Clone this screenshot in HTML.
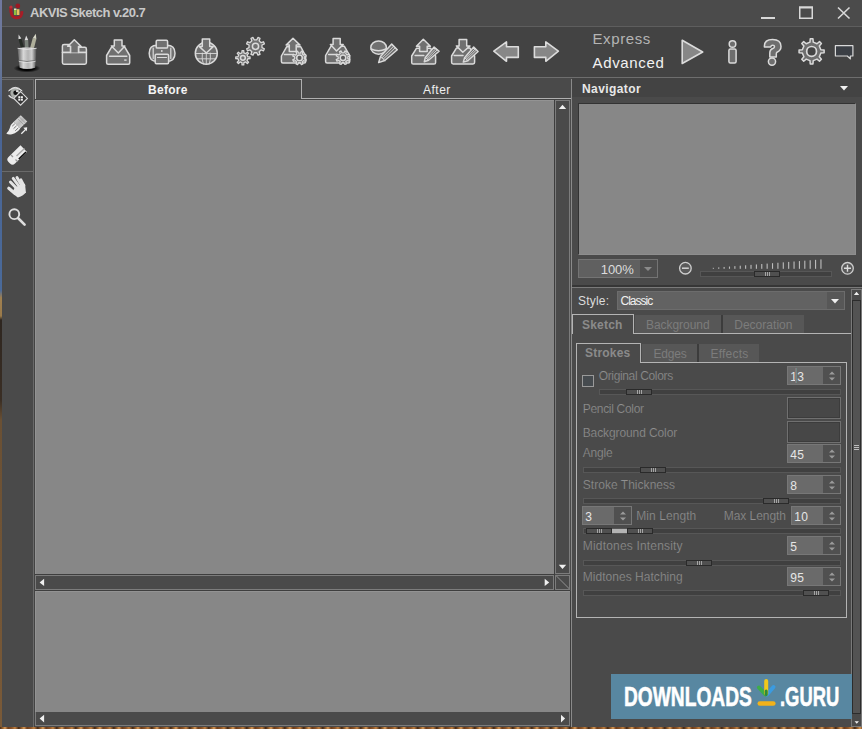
<!DOCTYPE html>
<html><head><meta charset="utf-8">
<style>
*{margin:0;padding:0;box-sizing:border-box}
html,body{width:862px;height:729px;overflow:hidden;background:#4a4a4a}
body{position:relative;font-family:"Liberation Sans",sans-serif}
.a{position:absolute}
.t{position:absolute;white-space:nowrap;line-height:1}
svg{position:absolute;overflow:visible}
</style></head><body>

<!-- left blue edge -->
<div class="a" style="left:0;top:0;width:2px;height:729px;background:linear-gradient(180deg,#7078a0 0px,#6a7898 60px,#4a6494 120px,#4a6a9a 290px,#a08050 298px,#9a7a4a 316px,#2e2620 320px,#3a2e24 400px,#6a5034 420px,#7a5a38 729px)"></div>

<!-- title bar -->
<div class="a" style="left:2px;top:0;width:860px;height:26px;background:#4b4b4b"></div>
<div class="a" style="left:2px;top:26px;width:860px;height:1px;background:#5e5e5e"></div>
<div class="t" style="left:30px;top:6px;font-size:13px;font-weight:bold;color:#c8c8c8;letter-spacing:-0.5px">AKVIS Sketch v.20.7</div>

<!-- toolbar -->
<div class="a" style="left:2px;top:27px;width:860px;height:50px;background:#434343"></div>
<div class="a" style="left:2px;top:77px;width:860px;height:1px;background:#6e6e6e"></div>

<!-- main bg -->
<div class="a" style="left:2px;top:78px;width:860px;height:649px;background:#4a4a4a"></div>
<!-- desktop strip -->
<div class="a" style="left:0;top:727px;width:862px;height:2px;background:repeating-linear-gradient(90deg,#4a2a14 0px,#a06830 3px,#d89a58 5px,#6a3a18 8px,#8a5428 12px,#c08040 15px,#3a2010 19px)"></div>

<!-- left toolbox -->
<div class="a" style="left:2px;top:79px;width:31px;height:1px;background:#6a6a6a"></div>
<div class="a" style="left:33px;top:79px;width:1px;height:648px;background:#6a6a6a"></div>
<div class="a" style="left:2px;top:171px;width:31px;height:1px;background:#6a6a6a"></div>

<!-- tabs -->
<div class="a" style="left:35px;top:79px;width:267px;height:21px;border:1px solid #b0b0b0;border-bottom:none;background:#4a4a4a"></div>
<div class="a" style="left:302px;top:98px;width:269px;height:1px;background:#b0b0b0"></div>
<div class="t" style="left:148px;top:84px;font-size:12px;font-weight:bold;color:#f4f4f4;letter-spacing:0.3px">Before</div>
<div class="t" style="left:423px;top:84px;font-size:12px;color:#eeeeee;letter-spacing:0.5px">After</div>

<!-- canvas area -->
<div class="a" style="left:571px;top:79px;width:1px;height:648px;background:#8a8a8a"></div>
<div class="a" style="left:35px;top:99px;width:536px;height:1px;background:#434343"></div>
<div class="a" style="left:35px;top:100px;width:519px;height:474px;background:#878787;border-left:1px solid #939393;border-top:1px solid #939393"></div>
<div class="a" style="left:554px;top:100px;width:1px;height:474px;background:#3e3e3e"></div>
<!-- v scrollbar -->
<div class="a" style="left:555px;top:100px;width:15px;height:474px;border:1px solid #7c7c7c;background:#4a4a4a"></div>
<!-- h scrollbar -->
<div class="a" style="left:35px;top:574px;width:520px;height:1px;background:#3e3e3e"></div>
<div class="a" style="left:35px;top:575px;width:519px;height:15px;border:1px solid #7c7c7c;background:#4a4a4a"></div>
<div class="a" style="left:554px;top:575px;width:1px;height:15px;background:#3e3e3e"></div>
<!-- corner -->
<div class="a" style="left:555px;top:575px;width:15px;height:15px;border:1px solid #7c7c7c;background:#4a4a4a;overflow:hidden"><div class="a" style="left:-3px;top:6px;width:20px;height:1px;background:#7c7c7c;transform:rotate(45deg)"></div></div>
<div class="a" style="left:35px;top:590px;width:535px;height:1px;background:#3e3e3e"></div>
<!-- bottom canvas -->
<div class="a" style="left:35px;top:591px;width:535px;height:121px;background:#878787;border-left:1px solid #939393;border-top:1px solid #939393"></div>
<div class="a" style="left:570px;top:591px;width:1px;height:136px;background:#3e3e3e"></div>
<div class="a" style="left:35px;top:712px;width:535px;height:14px;background:#4a4a4a;border-left:1px solid #7c7c7c;border-right:1px solid #7c7c7c;border-bottom:1px solid #7c7c7c"></div>
<div class="a" style="left:34px;top:99px;width:1px;height:628px;background:#434343"></div>

<!-- right panel -->
<div class="a" style="left:572px;top:78px;width:290px;height:19px;background:#434343"></div>
<div class="t" style="left:582px;top:83px;font-size:12px;font-weight:bold;color:#e8e8e8;letter-spacing:0.4px">Navigator</div>
<div class="a" style="left:578px;top:103px;width:278px;height:152px;background:#878787;border-left:1px solid #333;border-top:1px solid #333;border-right:1px solid #8e8e8e;border-bottom:1px solid #8e8e8e"></div>


<!-- Express / Advanced -->
<div class="t" style="left:592.5px;top:31px;font-size:15px;color:#b4b4b4;letter-spacing:0.6px">Express</div>
<div class="t" style="left:592.5px;top:55px;font-size:15px;color:#f2f2f2;letter-spacing:0.65px">Advanced</div>

<!-- canvas scroll arrows -->
<svg width="862" height="729" style="left:0;top:0" viewBox="0 0 862 729">
<g fill="#f0f0f0">
<path d="M558.8,109 L562.5,104.8 L566.2,109 Z"/>
<path d="M558.8,564.7 L566.2,564.7 L562.5,568.9 Z"/>
<path d="M44.1,578.8 L44.1,586.1 L39.6,582.45 Z"/>
<path d="M544.7,578.8 L544.7,586.1 L549.2,582.45 Z"/>
<path d="M44.1,714.7 L44.1,722.4 L39.6,718.55 Z"/>
<path d="M561,714.7 L561,722.4 L565.1,718.55 Z"/>
<path d="M840,86 L848,86 L844,90.5 Z"/>
</g>
</svg>

<!-- PANEL START -->
<div class="a" style="left:578px;top:259px;width:80px;height:19px;background:#606060;border:1px solid #747474"></div>
<div class="a" style="left:640px;top:260px;width:17px;height:17px;background:#4e4e4e"></div>
<svg width="20" height="20" style="left:638px;top:258px" viewBox="0 0 20 20"><path d="M6,9 L14,9 L10,13 Z" fill="#8a8a8a"/></svg>
<div class="t" style="left:600.8px;top:263.0px;font-size:13px;color:#dcdcdc;letter-spacing:-0.1px">100%</div>
<svg width="862" height="729" style="left:0;top:0" viewBox="0 0 862 729"><circle cx="685.4" cy="268.2" r="5.8" fill="#5a5a5a" stroke="#cfcfcf" stroke-width="1.3"/><path d="M682,268.2 H688.8" stroke="#dcdcdc" stroke-width="1.4"/><circle cx="847.5" cy="268.3" r="5.8" fill="#5a5a5a" stroke="#cfcfcf" stroke-width="1.3"/><path d="M844,268.3 H851 M847.5,264.8 V271.8" stroke="#dcdcdc" stroke-width="1.4"/><rect x="712.80" y="267.80" width="1.1" height="1.00" fill="#bdbdbd"/><rect x="718.18" y="267.38" width="1.1" height="1.42" fill="#bdbdbd"/><rect x="723.56" y="266.96" width="1.1" height="1.84" fill="#bdbdbd"/><rect x="728.94" y="266.54" width="1.1" height="2.26" fill="#bdbdbd"/><rect x="734.32" y="266.12" width="1.1" height="2.68" fill="#bdbdbd"/><rect x="739.70" y="265.70" width="1.1" height="3.10" fill="#bdbdbd"/><rect x="745.08" y="265.28" width="1.1" height="3.52" fill="#bdbdbd"/><rect x="750.46" y="264.86" width="1.1" height="3.94" fill="#bdbdbd"/><rect x="755.84" y="264.44" width="1.1" height="4.36" fill="#bdbdbd"/><rect x="761.22" y="264.02" width="1.1" height="4.78" fill="#bdbdbd"/><rect x="766.60" y="263.60" width="1.1" height="5.20" fill="#bdbdbd"/><rect x="771.98" y="263.18" width="1.1" height="5.62" fill="#bdbdbd"/><rect x="777.36" y="262.76" width="1.1" height="6.04" fill="#bdbdbd"/><rect x="782.74" y="262.34" width="1.1" height="6.46" fill="#bdbdbd"/><rect x="788.12" y="261.92" width="1.1" height="6.88" fill="#bdbdbd"/><rect x="793.50" y="261.50" width="1.1" height="7.30" fill="#bdbdbd"/><rect x="798.88" y="261.08" width="1.1" height="7.72" fill="#bdbdbd"/><rect x="804.26" y="260.66" width="1.1" height="8.14" fill="#bdbdbd"/><rect x="809.64" y="260.24" width="1.1" height="8.56" fill="#bdbdbd"/><rect x="815.02" y="259.82" width="1.1" height="8.98" fill="#bdbdbd"/><rect x="820.40" y="259.40" width="1.1" height="9.40" fill="#bdbdbd"/></svg>
<div class="a" style="left:700px;top:271px;width:132px;height:6px;background:#404040;border:1px solid #575757"></div>
<div class="a" style="left:754px;top:271px;width:26px;height:6px;background:#505050;border:1px solid #2a2a2a"></div>
<div class="a" style="left:765px;top:272px;width:5px;height:4px;background:repeating-linear-gradient(90deg,#a4a4a4 0 1px,transparent 1px 2px)"></div>
<div class="a" style="left:572px;top:285px;width:290px;height:2px;background:#363636"></div>
<div class="a" style="left:572px;top:287px;width:290px;height:1px;background:#7a7a7a"></div>
<div class="t" style="left:578px;top:294.8px;font-size:12px;color:#dcdcdc;letter-spacing:0.2px">Style:</div>
<div class="a" style="left:617px;top:291px;width:228px;height:19px;background:#626262;border:1px solid #6c6c6c"></div>
<div class="a" style="left:827px;top:292px;width:17px;height:17px;background:#575757"></div>
<svg width="20" height="20" style="left:825.3px;top:291px" viewBox="0 0 20 20"><path d="M6,8 L14,8 L10,12.5 Z" fill="#f0f0f0"/></svg>
<div class="t" style="left:620.5px;top:294.8px;font-size:12px;color:#f0f0f0;letter-spacing:-1.0px">Classic</div>
<div class="a" style="left:851px;top:289px;width:11px;height:438px;border:1px solid #7a7a7a;border-right:none;background:#4a4a4a"></div>
<div class="a" style="left:861px;top:289px;width:1px;height:438px;background:#7a7a7a"></div>
<div class="a" style="left:852px;top:300px;width:9px;height:414px;background:#535353;border:1px solid #2c2c2c"></div>
<div class="a" style="left:854px;top:445px;width:5px;height:5px;background:repeating-linear-gradient(180deg,#bdbdbd 0 1px,transparent 1px 2px)"></div>
<svg width="862" height="729" style="left:0;top:0" viewBox="0 0 862 729"><path d="M853.9,295.1 L856.55,291.8 L859.2,295.1 Z M854.6,721.3 L858.9,721.3 L856.75,723.7 Z" fill="#f0f0f0"/></svg>
<div class="a" style="left:635px;top:315px;width:86px;height:18px;background:#575757"></div>
<div class="a" style="left:723px;top:315px;width:81px;height:18px;background:#575757"></div>
<div class="a" style="left:721px;top:315px;width:2px;height:18px;background:#3c3c3c"></div>
<div class="a" style="left:697px;top:344px;width:2px;height:18px;background:#3c3c3c"></div>
<div class="a" style="left:572px;top:314px;width:62px;height:20px;border:1px solid #b4b4b4;border-bottom:none;background:#4a4a4a"></div>
<div class="a" style="left:633px;top:333px;width:218px;height:1px;background:#b4b4b4"></div>
<div class="t" style="left:582px;top:319.0px;font-size:12px;color:#8a8a8a;font-weight:bold;letter-spacing:0.2px">Sketch</div>
<div class="t" style="left:646px;top:319.1px;font-size:12px;color:#7c7c7c;letter-spacing:-0.05px">Background</div>
<div class="t" style="left:734.2px;top:319.1px;font-size:12px;color:#7c7c7c;letter-spacing:0.03px">Decoration</div>
<div class="a" style="left:642px;top:344px;width:55px;height:18px;background:#575757"></div>
<div class="a" style="left:699px;top:344px;width:60px;height:18px;background:#575757"></div>
<div class="a" style="left:576px;top:343px;width:65px;height:20px;border:1px solid #b4b4b4;border-bottom:none;background:#4a4a4a"></div>
<div class="a" style="left:640px;top:362px;width:207px;height:1px;background:#b4b4b4"></div>
<div class="a" style="left:576px;top:362px;width:271px;height:256px;border:1px solid #b4b4b4;border-top:none"></div>
<div class="t" style="left:585px;top:347.4px;font-size:12px;color:#8a8a8a;font-weight:bold;letter-spacing:0.2px">Strokes</div>
<div class="t" style="left:653.5px;top:347.7px;font-size:12px;color:#7c7c7c;letter-spacing:-0.2px">Edges</div>
<div class="t" style="left:710.4px;top:347.7px;font-size:12px;color:#7c7c7c;letter-spacing:0.25px">Effects</div>
<div class="a" style="left:582px;top:375px;width:12px;height:12px;background:#464b4f;border:1px solid #9a9a9a"></div>
<div class="t" style="left:598.7px;top:369.8px;font-size:12px;color:#909090;-webkit-text-stroke:0.2px #4a4a4a;letter-spacing:-0.35px">Original Colors</div>
<div class="a" style="left:787px;top:366px;width:54px;height:19px;background:#6a6a6a;border:1px solid #777"></div>
<div class="a" style="left:823px;top:367px;width:17px;height:17px;background:#505050"></div>
<div class="t" style="left:790.2px;top:370.8px;font-size:12px;color:#e6e6e6;letter-spacing:0.4px">13</div>
<svg width="20" height="20" style="left:821.5px;top:365.5px" viewBox="0 0 20 20"><path d="M7,8.5 L10,5.5 L13,8.5 Z M7,11.5 L13,11.5 L10,14.5 Z" fill="#9a9a9a"/></svg>
<div class="a" style="left:795px;top:368px;width:1px;height:15px;background:#86767a"></div>
<div class="a" style="left:796px;top:368px;width:1px;height:15px;background:#6e8884"></div>
<div class="a" style="left:599px;top:389px;width:242px;height:6px;background:#404040;border:1px solid #575757"></div>
<div class="a" style="left:626px;top:389px;width:26px;height:6px;background:#505050;border:1px solid #2a2a2a"></div>
<div class="a" style="left:637px;top:390px;width:5px;height:4px;background:repeating-linear-gradient(90deg,#a4a4a4 0 1px,transparent 1px 2px)"></div>
<div class="t" style="left:582.7px;top:402.8px;font-size:12px;color:#909090;-webkit-text-stroke:0.2px #4a4a4a;letter-spacing:-0.3px">Pencil Color</div>
<div class="a" style="left:787px;top:397px;width:54px;height:22px;background:#474747;border:1px solid #707070;box-shadow:inset 0 0 0 1px #3c3c3c"></div>
<div class="t" style="left:582.7px;top:426.6px;font-size:12px;color:#909090;-webkit-text-stroke:0.2px #4a4a4a;letter-spacing:-0.1px">Background Color</div>
<div class="a" style="left:787px;top:421px;width:54px;height:22px;background:#474747;border:1px solid #707070;box-shadow:inset 0 0 0 1px #3c3c3c"></div>
<div class="t" style="left:582.7px;top:447.2px;font-size:12px;color:#909090;-webkit-text-stroke:0.2px #4a4a4a;letter-spacing:-0.2px">Angle</div>
<div class="a" style="left:787px;top:444px;width:54px;height:19px;background:#6a6a6a;border:1px solid #777"></div>
<div class="a" style="left:823px;top:445px;width:17px;height:17px;background:#505050"></div>
<div class="t" style="left:790.2px;top:448.8px;font-size:12px;color:#e6e6e6;letter-spacing:0.4px">45</div>
<svg width="20" height="20" style="left:821.5px;top:443.5px" viewBox="0 0 20 20"><path d="M7,8.5 L10,5.5 L13,8.5 Z M7,11.5 L13,11.5 L10,14.5 Z" fill="#9a9a9a"/></svg>
<div class="a" style="left:583px;top:467px;width:258px;height:6px;background:#404040;border:1px solid #575757"></div>
<div class="a" style="left:640px;top:467px;width:26px;height:6px;background:#505050;border:1px solid #2a2a2a"></div>
<div class="a" style="left:651px;top:468px;width:5px;height:4px;background:repeating-linear-gradient(90deg,#a4a4a4 0 1px,transparent 1px 2px)"></div>
<div class="t" style="left:582.8px;top:478.5px;font-size:12px;color:#909090;-webkit-text-stroke:0.2px #4a4a4a;letter-spacing:0.03px">Stroke Thickness</div>
<div class="a" style="left:787px;top:475px;width:54px;height:19px;background:#6a6a6a;border:1px solid #777"></div>
<div class="a" style="left:823px;top:476px;width:17px;height:17px;background:#505050"></div>
<div class="t" style="left:790.2px;top:479.8px;font-size:12px;color:#e6e6e6;letter-spacing:0.4px">8</div>
<svg width="20" height="20" style="left:821.5px;top:474.5px" viewBox="0 0 20 20"><path d="M7,8.5 L10,5.5 L13,8.5 Z M7,11.5 L13,11.5 L10,14.5 Z" fill="#9a9a9a"/></svg>
<div class="a" style="left:583px;top:498px;width:258px;height:6px;background:#404040;border:1px solid #575757"></div>
<div class="a" style="left:763px;top:498px;width:26px;height:6px;background:#505050;border:1px solid #2a2a2a"></div>
<div class="a" style="left:774px;top:499px;width:5px;height:4px;background:repeating-linear-gradient(90deg,#a4a4a4 0 1px,transparent 1px 2px)"></div>
<div class="a" style="left:582px;top:506px;width:50px;height:19px;background:#6a6a6a;border:1px solid #777"></div>
<div class="a" style="left:614px;top:507px;width:17px;height:17px;background:#505050"></div>
<div class="t" style="left:585.2px;top:510.8px;font-size:12px;color:#e6e6e6;letter-spacing:0.4px">3</div>
<svg width="20" height="20" style="left:612.5px;top:505.5px" viewBox="0 0 20 20"><path d="M7,8.5 L10,5.5 L13,8.5 Z M7,11.5 L13,11.5 L10,14.5 Z" fill="#9a9a9a"/></svg>
<div class="t" style="left:636.3px;top:509.8px;font-size:12px;color:#909090;-webkit-text-stroke:0.2px #4a4a4a;letter-spacing:0.06px">Min Length</div>
<div class="t" style="left:723.7px;top:509.8px;font-size:12px;color:#909090;-webkit-text-stroke:0.2px #4a4a4a;letter-spacing:-0.04px">Max Length</div>
<div class="a" style="left:791px;top:506px;width:50px;height:19px;background:#6a6a6a;border:1px solid #777"></div>
<div class="a" style="left:823px;top:507px;width:17px;height:17px;background:#505050"></div>
<div class="t" style="left:794.2px;top:510.8px;font-size:12px;color:#e6e6e6;letter-spacing:0.4px">10</div>
<svg width="20" height="20" style="left:821.5px;top:505.5px" viewBox="0 0 20 20"><path d="M7,8.5 L10,5.5 L13,8.5 Z M7,11.5 L13,11.5 L10,14.5 Z" fill="#9a9a9a"/></svg>
<div class="a" style="left:583px;top:528px;width:258px;height:6px;background:#404040;border:1px solid #575757"></div>
<div class="a" style="left:612px;top:529px;width:15px;height:4px;background:#b4b4b4"></div>
<div class="a" style="left:586px;top:528px;width:26px;height:6px;background:#505050;border:1px solid #2a2a2a"></div>
<div class="a" style="left:597px;top:529px;width:5px;height:4px;background:repeating-linear-gradient(90deg,#a4a4a4 0 1px,transparent 1px 2px)"></div>
<div class="a" style="left:627px;top:528px;width:26px;height:6px;background:#505050;border:1px solid #2a2a2a"></div>
<div class="a" style="left:638px;top:529px;width:5px;height:4px;background:repeating-linear-gradient(90deg,#a4a4a4 0 1px,transparent 1px 2px)"></div>
<div class="t" style="left:582.8px;top:539.7px;font-size:12px;color:#909090;-webkit-text-stroke:0.2px #4a4a4a;letter-spacing:0.18px">Midtones Intensity</div>
<div class="a" style="left:787px;top:536px;width:54px;height:19px;background:#6a6a6a;border:1px solid #777"></div>
<div class="a" style="left:823px;top:537px;width:17px;height:17px;background:#505050"></div>
<div class="t" style="left:790.2px;top:540.8px;font-size:12px;color:#e6e6e6;letter-spacing:0.4px">5</div>
<svg width="20" height="20" style="left:821.5px;top:535.5px" viewBox="0 0 20 20"><path d="M7,8.5 L10,5.5 L13,8.5 Z M7,11.5 L13,11.5 L10,14.5 Z" fill="#9a9a9a"/></svg>
<div class="a" style="left:583px;top:560px;width:258px;height:6px;background:#404040;border:1px solid #575757"></div>
<div class="a" style="left:686px;top:560px;width:26px;height:6px;background:#505050;border:1px solid #2a2a2a"></div>
<div class="a" style="left:697px;top:561px;width:5px;height:4px;background:repeating-linear-gradient(90deg,#a4a4a4 0 1px,transparent 1px 2px)"></div>
<div class="t" style="left:582.8px;top:570.8px;font-size:12px;color:#909090;-webkit-text-stroke:0.2px #4a4a4a;letter-spacing:0.03px">Midtones Hatching</div>
<div class="a" style="left:787px;top:567px;width:54px;height:19px;background:#6a6a6a;border:1px solid #777"></div>
<div class="a" style="left:823px;top:568px;width:17px;height:17px;background:#505050"></div>
<div class="t" style="left:790.2px;top:571.8px;font-size:12px;color:#e6e6e6;letter-spacing:0.4px">95</div>
<svg width="20" height="20" style="left:821.5px;top:566.5px" viewBox="0 0 20 20"><path d="M7,8.5 L10,5.5 L13,8.5 Z M7,11.5 L13,11.5 L10,14.5 Z" fill="#9a9a9a"/></svg>
<div class="a" style="left:583px;top:590px;width:258px;height:6px;background:#404040;border:1px solid #575757"></div>
<div class="a" style="left:803px;top:590px;width:26px;height:6px;background:#505050;border:1px solid #2a2a2a"></div>
<div class="a" style="left:814px;top:591px;width:5px;height:4px;background:repeating-linear-gradient(90deg,#a4a4a4 0 1px,transparent 1px 2px)"></div>
<!-- PANEL END -->
<!-- LEFT START -->
<svg width="40" height="240" style="left:0;top:0" viewBox="0 0 40 240">
<defs>
<linearGradient id="ferr" x1="0" y1="0" x2="1" y2="1"><stop offset="0" stop-color="#f4f4f4"/><stop offset="0.5" stop-color="#b8b8b8"/><stop offset="1" stop-color="#e8e8e8"/></linearGradient>
</defs>
<!-- eye -->
<path d="M8.6,90.8 Q15,83.8 22.2,90.8 Q15,86.6 8.6,90.8 Z" fill="#e0e0e0" stroke="#e0e0e0" stroke-width="1"/>
<path d="M8.6,95.2 Q12,98.8 16,98.8" fill="none" stroke="#d8d8d8" stroke-width="1.3"/>
<circle cx="15" cy="93" r="4.6" fill="#a8aca8"/>
<circle cx="15.6" cy="92.8" r="2.3" fill="#0e0e0e"/>
<circle cx="17" cy="91.3" r="1" fill="#f0f0f0"/>
<path d="M20.6,91.6 L27.4,98.4 L20.6,105.2 L13.8,98.4 Z" fill="#383838" stroke="#dadada" stroke-width="1.1"/>
<path d="M20.6,95.2 V101.6 M17.4,98.4 H23.8" stroke="#383838" stroke-width="0.6"/>
<rect x="18.3" y="96.2" width="2" height="2" fill="#f2f2f2"/>
<rect x="20.9" y="96.2" width="2" height="2" fill="#f2f2f2"/>
<rect x="18.3" y="98.7" width="2" height="2" fill="#f2f2f2"/>
<rect x="20.9" y="98.7" width="2" height="2" fill="#f2f2f2"/>
<!-- brush -->
<path d="M20.8,115.2 L27.3,121.6 L20.3,128.3 L13.8,121.8 Z" fill="url(#ferr)"/>
<path d="M17.5,118.5 L24,125 M19.2,116.8 L25.7,123.3" stroke="#9a9a9a" stroke-width="0.8"/>
<path d="M13.8,121.8 L20.3,128.3 Q18,132.5 12,134.2 Q8.5,135 6.3,133.6 Q8.6,131.8 9.6,128.5 Q10.8,124 13.8,121.8 Z" fill="#ededed"/>
<path d="M12.2,126.2 L14.8,123.8 M13.6,128.6 L16.6,125.8 M15.2,130.8 L18.4,127.8" stroke="#6a6a6a" stroke-width="0.9"/>
<path d="M21.3,133.8 L26.5,128.6" stroke="#f0f0f0" stroke-width="1.3"/>
<path d="M23.3,127.8 L27.2,127.3 L26.7,131.2 Z" fill="#f0f0f0"/>
<!-- eraser -->
<path d="M20.5,145.3 L27,152 L15,163.5 Q12.5,166 10,163.5 L8.5,162 Q6,159.5 8.5,157 Z" fill="#ececec"/>
<path d="M16.5,156 L24.5,148.5" stroke="#a8a8a8" stroke-width="1.4"/>
<path d="M18.8,159 L26,152" stroke="#111" stroke-width="1.6"/>
<path d="M11,155 L13,157 M15.5,159.5 L17.5,161.5" stroke="#999" stroke-width="1.3"/>
<!-- hand -->
<g stroke="#e4e4e4" stroke-linecap="round" fill="none">
<path d="M8.8,188.3 L15,193.5" stroke-width="3.2"/>
<path d="M10.4,182 L17.2,189" stroke-width="2.9"/>
<path d="M13.2,178.3 L19.5,187" stroke-width="2.9"/>
<path d="M17,177.6 L22,186" stroke-width="2.9"/>
<path d="M20.9,179.6 L24,185.5" stroke-width="2.6"/>
</g>
<path d="M14.5,188 L20,185 L25,183.8 L25.9,192.3 Q24,195.5 17.8,197.5 Q14.5,196 12.5,192 Z" fill="#e4e4e4"/>
<!-- magnifier -->
<circle cx="14.3" cy="214.2" r="4.9" fill="none" stroke="#dedede" stroke-width="1.9"/>
<path d="M18,218 L24.6,224.6" stroke="#dedede" stroke-width="2.6" stroke-linecap="round"/>
</svg>
<!-- watermark -->
<div class="a" style="left:611px;top:674px;width:241px;height:45px;background:#5887a1"></div>
<div class="t" style="left:623.5px;top:682.6px;font-size:27.5px;font-weight:bold;color:#ffffff;transform:scaleX(0.697);transform-origin:0 0;-webkit-text-stroke:0.6px #fff">DOWNLOADS</div>
<div class="t" style="left:779.5px;top:682.6px;font-size:27.5px;font-weight:bold;color:#ffffff;transform:scaleX(0.67);transform-origin:0 0;-webkit-text-stroke:0.6px #fff">.GURU</div>
<svg width="30" height="40" style="left:750px;top:672px" viewBox="750 672 30 40">
<path d="M759,687.5 L765.5,694.5" stroke="#3dae49" stroke-width="4" stroke-linecap="round"/>
<path d="M773.5,687 L767,694.5" stroke="#3b9be0" stroke-width="4" stroke-linecap="round"/>
<path d="M766.2,681 L766.2,693.5" stroke="#f2c81a" stroke-width="4" stroke-linecap="round"/>
<path d="M766.2,691 L766.2,694.5" stroke="#2f8a3a" stroke-width="3" stroke-linecap="round"/>
<path d="M759.8,703.5 H773.3" stroke="#f2b21a" stroke-width="4.6" stroke-linecap="round"/>
</svg>

<!-- LEFT END -->
<!-- TOOLBAR SVG -->
<svg width="862" height="729" style="left:0;top:0" viewBox="0 0 862 729">
<defs>
<linearGradient id="cup" x1="0" x2="1" y1="0" y2="0"><stop offset="0" stop-color="#5e5e5e"/><stop offset="0.3" stop-color="#d8d8d8"/><stop offset="0.55" stop-color="#b4b4b4"/><stop offset="0.75" stop-color="#cfcfcf"/><stop offset="1" stop-color="#4a4a4a"/></linearGradient>
<radialGradient id="shd"><stop offset="0.5" stop-color="#000"/><stop offset="1" stop-color="#000" stop-opacity="0"/></radialGradient>
</defs>
<g stroke="#dadada" stroke-width="1.5" fill="#707070" stroke-linejoin="round" stroke-linecap="round">
<!-- open folder -->
<path d="M62.4,52.5 V46 Q62.4,44.4 64,44.4 H69.3 L67.9,46.3 H70.6 V52.5 Z"/>
<path d="M78.5,52.5 V47.3 H84.8 Q86.4,47.3 86.4,49 V52.5 Z"/>
<path d="M62.4,52.5 H86.4 V62.6 Q86.4,64.2 84.8,64.2 H64 Q62.4,64.2 62.4,62.6 Z"/>
<path d="M70.6,52.5 V46.3 H67.9 L74.3,39.7 L81.2,46.5 H78.5 V52.5"/>
<!-- save tray -->
<path d="M111.4,47.3 L106.6,55.5 V62.8 Q106.6,64.3 108.1,64.3 H128.2 Q129.7,64.3 129.7,62.8 V55.5 L124.9,47.3 Z"/>
<path d="M114.3,39.9 H122 V45.9 H124.9 L118.3,53 L111.4,45.9 H114.3 Z"/>
<path d="M109.6,56.2 H126.8" fill="none"/>
<rect x="124.2" y="59.4" width="2.4" height="1.4" fill="#dadada" stroke="none"/>
<!-- printer -->
<path d="M157,45.2 H167 Q175,45.2 175,53.3 Q175,61.4 167,61.4 H157 Q149.2,61.4 149.2,53.3 Q149.2,45.2 157,45.2 Z"/>
<rect x="156.2" y="40.3" width="11.4" height="7.8" rx="1.2"/>
<rect x="155.2" y="54.3" width="13.4" height="9.5" rx="1.2"/>
<path d="M153.2,48 V58.5 M170.8,48 V58.5 M157.5,57.5 H166.5" fill="none" stroke-width="1.2"/>
<circle cx="161.8" cy="51" r="0.9" fill="#dadada" stroke="none"/>
<!-- globe -->
<circle cx="206.3" cy="53.3" r="11"/>
<path d="M195.5,53.5 H217 M197.5,58.8 H215 M202.3,53 Q201.5,59 203.3,64 M210.3,53 Q211.1,59 209.3,64 M206.3,53 V64.3" fill="none" stroke-width="0.9"/>
<path d="M202.3,39 H209.7 V46.6 H213.2 L206.3,53 L199.4,46.6 H202.3 Z"/>
<!-- gears -->
<path d="M261.97,47.60 L264.36,48.78 L263.52,50.81 L260.99,49.96 L259.16,51.79 L260.01,54.32 L257.98,55.16 L256.80,52.77 L254.20,52.77 L253.02,55.16 L250.99,54.32 L251.84,51.79 L250.01,49.96 L247.48,50.81 L246.64,48.78 L249.03,47.60 L249.03,45.00 L246.64,43.82 L247.48,41.79 L250.01,42.64 L251.84,40.81 L250.99,38.28 L253.02,37.44 L254.20,39.83 L256.80,39.83 L257.98,37.44 L260.01,38.28 L259.16,40.81 L260.99,42.64 L263.52,41.79 L264.36,43.82 L261.97,45.00Z" stroke-width="1.3"/>
<circle cx="255.5" cy="46.3" r="3.1" fill="none"/>
<path d="M247.81,56.83 L250.05,56.94 L250.05,58.66 L247.81,58.77 L247.05,60.58 L248.56,62.25 L247.35,63.46 L245.68,61.95 L243.87,62.71 L243.76,64.95 L242.04,64.95 L241.93,62.71 L240.12,61.95 L238.45,63.46 L237.24,62.25 L238.75,60.58 L237.99,58.77 L235.75,58.66 L235.75,56.94 L237.99,56.83 L238.75,55.02 L237.24,53.35 L238.45,52.14 L240.12,53.65 L241.93,52.89 L242.04,50.65 L243.76,50.65 L243.87,52.89 L245.68,53.65 L247.35,52.14 L248.56,53.35 L247.05,55.02Z" stroke-width="1.3"/>
<circle cx="242.9" cy="57.8" r="2.4" fill="none"/>
<!-- load preset -->
<path d="M286.6,46.8 L281.4,56 V61.6 Q281.4,63.1 282.9,63.1 H304.2 Q305.7,63.1 305.7,61.6 V56 L300.8,46.8 Z"/>
<path d="M289.3,51.5 V45.1 H286.1 L293,38.2 L300,45.1 H296.2 V51.5 Z"/>
<path d="M284.4,54.5 H293.8" fill="none"/>
<path d="M304.30,58.86 L306.24,59.79 L305.60,61.33 L303.58,60.62 L302.22,61.98 L302.93,64.00 L301.39,64.64 L300.46,62.70 L298.54,62.70 L297.61,64.64 L296.07,64.00 L296.78,61.98 L295.42,60.62 L293.40,61.33 L292.76,59.79 L294.70,58.86 L294.70,56.94 L292.76,56.01 L293.40,54.47 L295.42,55.18 L296.78,53.82 L296.07,51.80 L297.61,51.16 L298.54,53.10 L300.46,53.10 L301.39,51.16 L302.93,51.80 L302.22,53.82 L303.58,55.18 L305.60,54.47 L306.24,56.01 L304.30,56.94Z" stroke-width="1.3"/>
<circle cx="299.5" cy="57.9" r="2.8" fill="#5a5a5a"/>
<!-- save preset -->
<path d="M330.9,46.3 L325.6,55.5 V61.4 Q325.6,62.9 327.1,62.9 H348.2 Q349.7,62.9 349.7,61.4 V55.5 L344.4,46.3 Z"/>
<path d="M333.1,38.5 H340.2 V44.6 H343.2 L336.5,51 L330.4,44.6 H333.1 Z"/>
<path d="M328.6,54.5 H337" fill="none"/>
<path d="M347.80,58.66 L349.74,59.59 L349.10,61.13 L347.08,60.42 L345.72,61.78 L346.43,63.80 L344.89,64.44 L343.96,62.50 L342.04,62.50 L341.11,64.44 L339.57,63.80 L340.28,61.78 L338.92,60.42 L336.90,61.13 L336.26,59.59 L338.20,58.66 L338.20,56.74 L336.26,55.81 L336.90,54.27 L338.92,54.98 L340.28,53.62 L339.57,51.60 L341.11,50.96 L342.04,52.90 L343.96,52.90 L344.89,50.96 L346.43,51.60 L345.72,53.62 L347.08,54.98 L349.10,54.27 L349.74,55.81 L347.80,56.74Z" stroke-width="1.3"/>
<circle cx="343" cy="57.7" r="2.8" fill="#5a5a5a"/>
<!-- ball + pencil -->
<ellipse cx="378.6" cy="47.6" rx="7.8" ry="6.6"/>
<path d="M371,49 Q378.6,52.5 386,49" fill="none"/>
<path d="M391.7,44.1 L397.3,49.8 L384.8,60.5 L378.6,62.6 L380.5,56.5 Z"/>
<path d="M393.7,46.2 L382.0,57.8 M395.3,47.7 L383.3,59.1  M380.3,56.3 L385,60.6" fill="none" stroke-width="0.9"/>
<!-- tray up + pencil -->
<path d="M416.4,48.3 L411.7,56 V62.5 Q411.7,64.1 413.3,64.1 H434 Q435.6,64.1 435.6,62.5 V56 L430.7,48.3 Z"/>
<path d="M419.6,51.5 V46.3 H416.4 L423.3,39.2 L430.4,46.3 H427.2 V51.5 Z"/>
<path d="M415.1,55.5 H423.8" fill="none"/>
<path d="M434.1,47.1 L439.1,51.3 L428.5,60.2 L424.3,61.7 L425.3,57.5 Z"/>
<path d="M435.9,48.6 L426.4,58.4 M437.3,49.8 L427.4,59.2  M425.2,57.3 L428.6,60.3" fill="none" stroke-width="0.9"/>
<!-- tray down + pencil -->
<path d="M456.4,48.1 L451.6,56 V62.3 Q451.6,63.9 453.2,63.9 H473 Q474.6,63.9 474.6,62.3 V56 L470,48.1 Z"/>
<path d="M459.1,39.5 H466.7 V45.9 H470 L462.8,52.3 L456.4,45.9 H459.1 Z"/>
<path d="M454.1,55.5 H463" fill="none"/>
<path d="M473.7,47.1 L478.1,51.5 L467.8,60.7 L463.3,62.1 L464.6,57.7 Z"/>
<path d="M475.3,48.7 L465.7,58.7 M476.5,49.9 L466.7,59.6  M464.5,57.5 L467.9,60.8" fill="none" stroke-width="0.9"/>
</g>
<g stroke="#dcdcdc" stroke-width="1.6" fill="#878787" stroke-linejoin="round">
<path d="M493.8,51.2 L506.5,41.9 V46.8 H518.3 V57.4 H506.5 V61.3 Z"/>
<path d="M558.4,51.2 L545.8,41.9 V46.8 H534.4 V57.4 H545.8 V61.3 Z"/>
<path d="M682.2,40.2 L702.7,52 L682.2,63.5 Z"/>
</g>
<g stroke="#dadada" stroke-width="1.5" fill="#6e6e6e" stroke-linejoin="round">
<circle cx="732.5" cy="44" r="3.3"/>
<rect x="728.9" y="49" width="7.2" height="14.1" rx="1.5"/>
<path d="M764.4,46 Q764.4,39.5 772.5,39.5 Q781,39.5 781,46.5 Q781,50.5 777,52.2 Q776.3,52.6 776.3,54 V57 H769.8 V53 Q769.8,49.5 773.3,48.3 Q774.5,47.8 774.5,46.5 Q774.5,45.2 772.8,45.2 Q770.8,45.2 770.8,47 H764.4 Z"/>
<circle cx="772" cy="61.6" r="3.6"/>
<path d="M820.86,49.76 L824.13,50.05 L824.13,52.75 L820.86,53.04 L819.30,56.79 L821.41,59.30 L819.50,61.21 L816.99,59.10 L813.24,60.66 L812.95,63.93 L810.25,63.93 L809.96,60.66 L806.21,59.10 L803.70,61.21 L801.79,59.30 L803.90,56.79 L802.34,53.04 L799.07,52.75 L799.07,50.05 L802.34,49.76 L803.90,46.01 L801.79,43.50 L803.70,41.59 L806.21,43.70 L809.96,42.14 L810.25,38.87 L812.95,38.87 L813.24,42.14 L816.99,43.70 L819.50,41.59 L821.41,43.50 L819.30,46.01Z"/>
<circle cx="811.6" cy="51.4" r="4.9" fill="#454545" stroke-width="1.7"/>
<path d="M835.4,45.7 H852.9 V56 H850.3 V58.9 L847.3,56 H835.4 Z" fill="#3b3f45" stroke-width="1.2"/>
</g>
<!-- logo -->
<ellipse cx="27" cy="68.3" rx="13.5" ry="4.2" fill="url(#shd)"/>
<path d="M18.46,39.34 L21.96,50.93 L24.84,50.07 L21.34,38.47Z" fill="#262c26"/><path d="M18.60,34.60 L18.46,39.34 L21.34,38.47Z" fill="#d8d8d8"/>
<path d="M24.61,40.18 L25.10,50.58 L28.70,50.42 L28.21,40.01Z" fill="#7c847c"/><path d="M26.20,35.60 L24.61,40.18 L28.21,40.01Z" fill="#dadada"/>
<path d="M32.69,38.15 L29.56,50.02 L33.24,50.98 L36.36,39.12Z" fill="#aeae9a"/><path d="M35.80,33.80 L32.69,38.15 L36.36,39.12Z" fill="#d8d8c8"/>
<path d="M17.6,48.3 Q27,46.3 36.6,48.3 L35.2,67.8 Q27,70.2 19.6,67.8 Z" fill="url(#cup)"/>
<path d="M18.6,60.5 Q27,62.5 35.6,60.5" fill="none" stroke="#6a6a6a" stroke-width="0.9"/>
<path d="M18.8,61.4 Q27,63.4 35.5,61.4" fill="none" stroke="#f4f4f4" stroke-width="0.6"/>
<path d="M17.6,48.3 Q27,50.3 36.6,48.3" fill="none" stroke="#eeeeee" stroke-width="0.8"/>
<!-- app icon -->
<path d="M10.8,7.2 Q10.2,17.8 16.5,17.8 Q22.5,17.8 21.8,11.2" fill="none" stroke="#a81c26" stroke-width="3"/>
<circle cx="17.8" cy="6" r="2.4" fill="#9a1a24"/>
<circle cx="11" cy="7" r="1.6" fill="#c03038"/>
<rect x="14" y="9" width="2.4" height="6" fill="#8cc040"/>
<rect x="16.8" y="9.2" width="2.6" height="5.8" fill="#e8c060"/>
<rect x="14" y="8.5" width="2.4" height="1.5" fill="#e8e0c0"/>
<!-- window controls -->
<rect x="761" y="17" width="14" height="2" fill="#d8d8d8"/>
<rect x="799.75" y="7.25" width="12.5" height="11" fill="none" stroke="#d8d8d8" stroke-width="1.5"/>
<rect x="799" y="6.5" width="14" height="2" fill="#d8d8d8"/>
<path d="M838,7.5 L849.5,18.5 M849.5,7.5 L838,18.5" stroke="#d8d8d8" stroke-width="1.6"/>
</svg>

</body></html>
